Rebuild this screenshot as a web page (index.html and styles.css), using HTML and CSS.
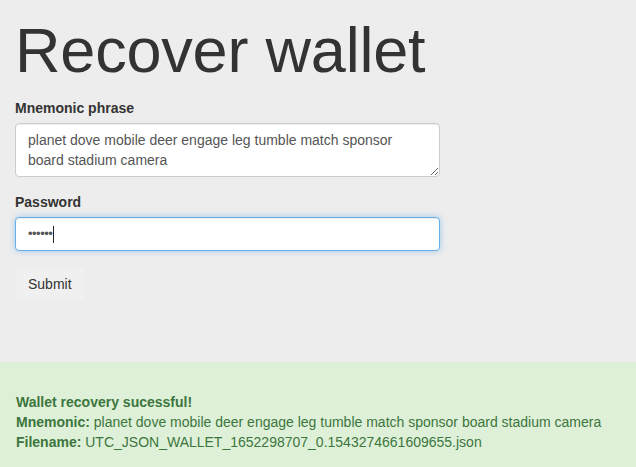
FILE: index.html
```html
<!DOCTYPE html>
<html lang="en">
<head>
<meta charset="utf-8">
<title>Recover wallet</title>
<link rel="stylesheet" href="styles.css">
</head>
<body>
<div class="container">
  <h1 class="title">Recover wallet</h1>
  <form class="form">
    <div class="group">
      <label class="label" for="mnemonic">Mnemonic phrase</label>
      <textarea id="mnemonic" class="control area" rows="2">planet dove mobile deer engage leg tumble match sponsor board stadium camera</textarea>
    </div>
    <div class="group">
      <label class="label" for="password">Password</label>
      <div class="control focused"><span class="dots">••••••</span><span class="caret"></span></div>
    </div>
    <button type="button" class="btn">Submit</button>
  </form>
</div>
<div class="alert">
  <div class="alert-line"><strong>Wallet recovery sucessful!</strong></div>
  <div class="alert-line"><strong>Mnemonic:</strong> planet dove mobile deer engage leg tumble match sponsor board stadium camera</div>
  <div class="alert-line"><strong>Filename:</strong> UTC_JSON_WALLET_1652298707_0.1543274661609655.json</div>
</div>
</body>
</html>
```

FILE: styles.css
```css
html, body {
  margin: 0;
  padding: 0;
  background: #ededed;
  font-family: "Liberation Sans", Arial, sans-serif;
  font-size: 14px;
  line-height: 20px;
  color: #333;
  overflow: hidden;
}

.container {
  padding: 0 15px;
  width: 425px;
}

.title {
  margin: 0;
  padding-top: 14px;
  font-size: 63px;
  line-height: 72px;
  font-weight: 400;
  color: #333;
  letter-spacing: -0.2px;
}

.form {
  margin-top: 12px;
}

.group {
  margin-bottom: 15px;
}

.label {
  display: block;
  font-weight: 700;
  margin-bottom: 5px;
  color: #333;
}

.control {
  display: block;
  box-sizing: border-box;
  width: 425px;
  padding: 6px 12px;
  font-family: "Liberation Sans", Arial, sans-serif;
  font-size: 14px;
  line-height: 20px;
  color: #555;
  background: #fff;
  border: 1px solid #ccc;
  border-radius: 4px;
  box-shadow: inset 0 1px 1px rgba(0,0,0,.075);
}

.area {
  height: 54px;
  resize: vertical;
  overflow: hidden;
  margin: 0;
}

.focused {
  height: 34px;
  border-color: #66afe9;
  box-shadow: inset 0 1px 1px rgba(0,0,0,.075), 0 0 6px rgba(102,175,233,.6);
  display: flex;
  align-items: center;
}

.dots {
  font-size: 13px;
  letter-spacing: -0.5px;
  color: #555;
}

.caret {
  display: inline-block;
  width: 1px;
  height: 17px;
  background: #222;
  margin-left: 1px;
}

.btn {
  margin-top: 1px;
  padding: 6px 12px;
  font-family: "Liberation Sans", Arial, sans-serif;
  font-size: 14px;
  line-height: 20px;
  color: #333;
  background: #f0f0f0;
  border: 1px solid #efefef;
  border-radius: 4px;
}

.alert {
  margin-top: 61px;
  padding: 30px 16px 20px;
  background: #dff0d8;
  color: #3c763d;
  height: 200px;
}
```
